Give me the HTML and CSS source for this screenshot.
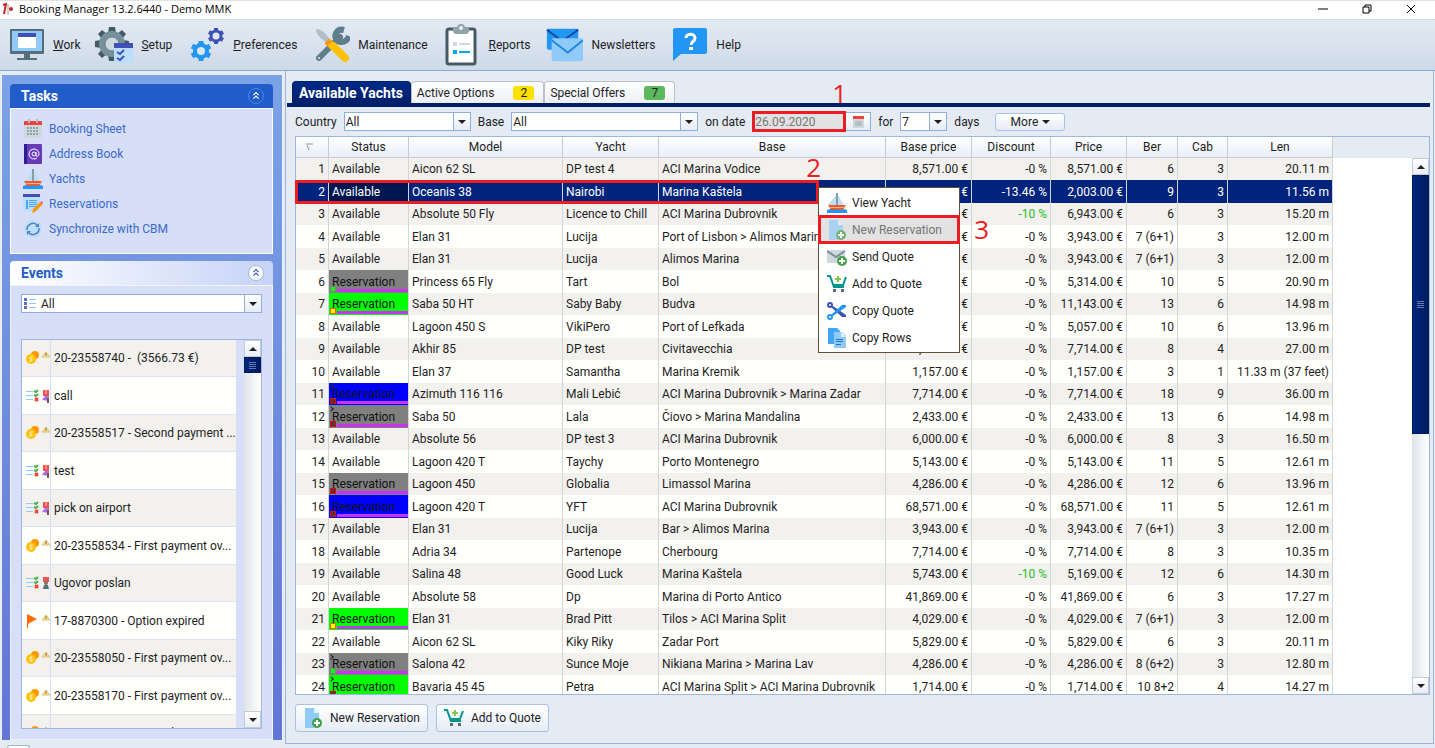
FILE: index.html
```html
<!DOCTYPE html>
<html lang="en">
<head>
    <meta charset="UTF-8">
    <meta name="viewport" content="width=device-width, initial-scale=1.0">
    <title>Booking Manager 13.2.6440 - Demo MMK</title>
    <link rel="stylesheet" href="styles.css">
</head>
<body>
    <!-- icons -->
    <svg class="sprite" aria-hidden="true">
        <symbol id="i-work" viewBox="0 0 38 38">
            <path fill="#546e7a" d="M4 3h32a1 1 0 0 1 1 1v23a1 1 0 0 1-1 1H4a1 1 0 0 1-1-1V4a1 1 0 0 1 1-1zM17 28h6v4h-6zM10 32h20v2H10z"/>
            <path fill="#90caf9" d="M5 5h30v20H5z"/>
            <path fill="#fff" d="M11 8h18v14H11z"/>
            <path fill="#3f51b5" d="M11 7h18v4H11z"/>
        </symbol>
        <symbol id="i-setup" viewBox="0 0 38 38">
            <g fill="#455a64">
                <path d="M14 1h6l1 6h-8zM14 35h6l1-6h-8zM0 15l6-1v8l-6-1zM34 15l-6-1v8l6-1z"/>
                <path d="M3 8l4-4 5 4-5 5zM31 8l-4-4-5 4 5 5zM3 28l4 4 5-4-5-5z"/>
            </g>
            <circle cx="17" cy="18" r="10" fill="none" stroke="#78909c" stroke-width="6"/>
            <circle cx="17" cy="18" r="7" fill="#cfd8dc" stroke="#607d8b"/>
            <path fill="#bbdefb" d="M19 18h19v19H19z"/>
            <path fill="#3f51b5" d="M19 17h19v5H19z"/>
            <path fill="none" stroke="#3f51b5" stroke-width="2" d="M22 26l3 2 4-4M22 32l3 2 4-4"/>
        </symbol>
        <symbol id="i-prefs" viewBox="0 0 38 38">
            <g stroke="#2196f3" stroke-width="5"><path d="M14 15v20M5 20l18 10M5 30l18-10"/></g>
            <circle cx="14" cy="25" r="6" fill="#dde6f1" stroke="#2196f3" stroke-width="4"/>
            <g stroke="#3f51b5" stroke-width="4"><path d="M29 2v16M22 6l14 8M22 14l14-8"/></g>
            <circle cx="29" cy="10" r="5" fill="#dde6f1" stroke="#3f51b5" stroke-width="3"/>
        </symbol>
        <symbol id="i-maint" viewBox="0 0 38 38">
            <path fill="#b0bec5" d="M4 3c4 0 9 3 12 8l4 5-3 3-6-5C7 11 4 7 4 3z"/>
            <path stroke="#607d8b" stroke-width="6" stroke-linecap="round" d="M7 32l21-21"/>
            <path fill="none" stroke="#607d8b" stroke-width="6" d="M32 4c-7-2-10 5-8 9s10 5 13-3"/>
            <circle cx="7" cy="32" r="1" fill="#eceff1"/>
            <path stroke="#ff9800" stroke-width="7" d="M15 15l5 5"/>
            <path stroke="#ffc107" stroke-width="8" stroke-linecap="round" d="M21 20l12 12"/>
        </symbol>
        <symbol id="i-reports" viewBox="0 0 38 42">
            <rect x="4" y="5" width="28" height="35" rx="2" fill="#fff" stroke="#455a64" stroke-width="3"/>
            <path fill="#90a4ae" d="M10 4h16v4l-2 2H12l-2-2z"/>
            <circle cx="18" cy="4" r="3" fill="#eceff1" stroke="#90a4ae" stroke-width="2"/>
            <path fill="#cfd8dc" d="M10 18h4v4h-4zM16 19h11v2H16z"/>
            <path fill="#03a9f4" d="M10 26h4v4h-4zM16 27h11v2H16z"/>
        </symbol>
        <symbol id="i-news" viewBox="0 0 40 38">
            <path fill="#2196f3" d="M3 2h31a1 1 0 0 1 1 1v21H4a2 2 0 0 1-2-2V4z"/>
            <path fill="none" stroke="#0d47a1" stroke-width="2" d="M2 3l16 12L35 3"/>
            <rect x="7" y="12" width="33" height="24" rx="2" fill="#90caf9"/>
            <path fill="none" stroke="#1e88e5" stroke-width="2" d="M7 14l17 13 16-13"/>
        </symbol>
        <symbol id="i-help" viewBox="0 0 38 38">
            <path fill="#2196f3" d="M5 2h30a2 2 0 0 1 2 2v22a2 2 0 0 1-2 2H11l-8 7V4a2 2 0 0 1 2-2z"/>
            <path fill="none" stroke="#fff" stroke-width="3" d="M16 12c0-5 9-5 9 0 0 4-4 3-4 7"/>
            <path fill="#fff" d="M19 21h4v3h-4z"/>
        </symbol>
        <symbol id="i-calendar" viewBox="0 0 20 20">
            <rect x="1" y="3" width="18" height="16" rx="2" fill="#cfd8dc"/>
            <path fill="#f44336" d="M1 6V3a1 1 0 0 1 1-1h16a1 1 0 0 1 1 1v3z"/>
            <path fill="#b0bec5" d="M5 0h2v4H5zM13 0h2v4h-2z"/>
            <path stroke="#90a4ae" stroke-width="2" stroke-dasharray="2 1" d="M4 9h12M4 12h12M4 15h12"/>
        </symbol>
        <symbol id="i-calendar-small" viewBox="0 0 13 13">
            <path fill="#cfd8dc" d="M1 3h11v10H1z"/>
            <path fill="#b0bec5" d="M3 6h7v5H3z"/>
            <path fill="#f44336" d="M1 1h11v3H1z"/>
        </symbol>
        <symbol id="i-address" viewBox="0 0 20 20">
            <rect x="1" y="0" width="18" height="20" rx="1" fill="#673ab7"/>
            <path fill="#311b92" d="M1 0h3v20H1z"/>
            <circle cx="11" cy="10" r="2" fill="none" stroke="#fff"/>
            <path fill="none" stroke="#fff" d="M13 8v3c0 2 3 2 3-1a5 5 0 1 0-2 4"/>
        </symbol>
        <symbol id="i-yacht" viewBox="0 0 20 20">
            <path fill="#bbdefb" d="M9 2v10H1zM11 2l6 10h-6z"/>
            <path fill="#8d9ba3" d="M9 0h2v13H9z"/>
            <path fill="#ff5722" d="M1 12h18l-3 5H4z"/>
            <path fill="#ffab91" d="M3 14h14v1H3z"/>
            <path fill="#2196f3" d="M0 17l3-1 3 1 4-1 4 1 3-1 3 1v3H0z"/>
        </symbol>
        <symbol id="i-reserv" viewBox="0 0 20 20">
            <path fill="#bbdefb" d="M0 3h17v14H0z"/>
            <path fill="#3f51b5" d="M0 0h17v3H0z"/>
            <path fill="#42a5f5" d="M3 6h2v9H3zM6 6h8v1H6zM6 8h8v1H6zM6 10h8v1H6zM6 12h8v1H6z"/>
            <path fill="#ff9800" d="M9 19l1-4 7-7 2 3-7 7z"/>
            <path fill="#f06292" d="M17 8l2-1 1 2-1 2z"/>
        </symbol>
        <symbol id="i-sync" viewBox="0 0 20 20">
            <circle cx="10" cy="10" r="9" fill="#bbdefb"/>
            <path fill="none" stroke="#4f7fc4" stroke-width="1.5" d="M4 11a6 6 0 0 1 10-5M16 9a6 6 0 0 1-10 5"/>
            <path fill="#4f7fc4" d="M12 8h4V4zM8 12H4v4z"/>
        </symbol>
        <symbol id="i-list" viewBox="0 0 12 12">
            <path fill="#5c6bc0" d="M0 0h3v3H0zM0 4h3v3H0zM0 8h3v3H0z"/>
            <path fill="#90caf9" d="M5 1h7v1H5zM5 5h7v1H5zM5 9h7v1H5z"/>
        </symbol>
        <symbol id="i-newres" viewBox="0 0 20 20">
            <path fill="#90caf9" d="M2 0h9l5 5v15H2z"/>
            <path fill="#e1f5fe" d="M11 0l5 5h-5z"/>
            <circle cx="14" cy="15" r="5" fill="#43a047"/>
            <path stroke="#fff" stroke-width="2" d="M14 12v6M11 15h6"/>
        </symbol>
        <symbol id="i-send" viewBox="0 0 20 20">
            <path fill="#cfd8dc" d="M0 3h18v13H0z"/>
            <path fill="none" stroke="#78909c" stroke-width="2" d="M0 4l9 6 9-6"/>
            <circle cx="15" cy="14" r="5" fill="#43a047"/>
            <path stroke="#fff" stroke-width="2" d="M15 11v6M12 14h6"/>
        </symbol>
        <symbol id="i-cart" viewBox="0 0 20 20">
            <path fill="none" stroke="#009688" stroke-width="2" d="M0 2h3l4 11h10M19 3l-3 8H7"/>
            <path fill="#8bc34a" d="M10 2h2v2h2v2h-2v2h-2V6H8V4h2z"/>
            <path fill="#546e7a" d="M6 15h3v3H6zM14 15h3v3h-3z"/>
        </symbol>
        <symbol id="i-cut" viewBox="0 0 20 20">
            <g fill="none" stroke-width="2">
                <circle cx="3" cy="4" r="2" stroke="#3f51b5"/><circle cx="3" cy="16" r="2" stroke="#2196f3"/>
            </g>
            <path fill="#3f51b5" d="M4 6l2-1 13 9v2h-4z"/>
            <path fill="#2196f3" d="M4 14l2 1L19 6V4h-4z"/>
        </symbol>
        <symbol id="i-copy" viewBox="0 0 20 20">
            <path fill="#42a5f5" d="M1 0h9l3 3v13H1z"/>
            <path fill="#90caf9" d="M7 4h8l4 4v12H7z"/>
            <path fill="#e3f2fd" d="M14 4l5 5h-5z"/>
            <path fill="#1976d2" d="M9 11h7v1H9zM9 13h7v1H9zM9 16h5v1H9z"/>
        </symbol>
        <symbol id="i-coin" viewBox="0 0 24 14">
            <circle cx="9" cy="4" r="4" fill="#ff9800"/>
            <circle cx="5" cy="8" r="5" fill="#ffc107"/>
            <path fill="none" stroke="#fff3c4" d="M7 6H4v2h2v2H3"/>
            <path fill="#f7e2a4" stroke="#e3c069" d="M20 1l4 5h-8z"/>
            <path stroke="#8d6e3f" d="M20 2v3"/>
        </symbol>
        <symbol id="i-call" viewBox="0 0 24 14">
            <path fill="#90caf9" d="M0 2h7v1H0zM0 6h7v1H0zM0 10h7v1H0z"/>
            <path fill="none" stroke="#4caf50" stroke-width="2" d="M8 2l2 1 2-2M8 6l2 1 2-2"/>
            <path stroke="#f44336" stroke-width="2" d="M9 9l3 3M12 9l-3 3"/>
            <path fill="#ef5350" d="M17 1h6v6h-6z"/>
            <path stroke="#ffcdd2" d="M20 0v5"/>
            <path fill="#ab6ee8" d="M16 11l3-4h4v5z"/>
            <path fill="#795548" d="M21 9h2v5h-2z"/>
        </symbol>
        <symbol id="i-person" viewBox="0 0 24 14">
            <path fill="#90caf9" d="M0 2h7v1H0zM0 6h7v1H0zM0 10h7v1H0z"/>
            <path fill="none" stroke="#4caf50" stroke-width="2" d="M8 2l2 1 2-2M8 6l2 1 2-2"/>
            <path stroke="#f44336" stroke-width="2" d="M9 9l3 3M12 9l-3 3"/>
            <path fill="#ef5350" d="M17 1h6v5h-6z"/>
            <circle cx="20" cy="7" r="2" fill="#8d6e63"/>
            <path fill="#546e7a" d="M17 13l1-4h4l1 4z"/>
        </symbol>
        <symbol id="i-flag" viewBox="0 0 24 14">
            <path fill="#ff6d00" d="M1 0l10 5-9 5v4H1z"/>
            <path fill="#f7e2a4" stroke="#e3c069" d="M20 1l4 5h-8z"/>
            <path stroke="#8d6e3f" d="M20 2v3"/>
        </symbol>
        <symbol id="i-collapse" viewBox="0 0 16 16">
            <path fill="none" stroke="currentColor" stroke-width="1.3" d="M5 7l3-3 3 3M5 11l3-3 3 3"/>
        </symbol>
        <symbol id="i-logo" viewBox="0 0 12 12">
            <path fill="none" stroke="#c62828" stroke-width="2" d="M1 2l3-1-2 10"/>
            <path stroke="#9e9e9e" d="M6 1v11"/>
            <circle cx="9" cy="6" r="2" fill="#c62828"/>
        </symbol>
    </svg>

    <header class="titlebar">
        <svg class="logo"><use href="#i-logo"/></svg>
        <span class="title">Booking Manager 13.2.6440 - Demo MMK</span>
        <button class="win-btn" aria-label="Minimize"><svg viewBox="0 0 10 10"><path d="M0 5h10"/></svg></button>
        <button class="win-btn" aria-label="Restore"><svg viewBox="0 0 10 10"><path d="M1 3h6v6H1zM3 3V1h6v6H7"/></svg></button>
        <button class="win-btn" aria-label="Close"><svg viewBox="0 0 10 10"><path d="M1 1l8 8M9 1L1 9"/></svg></button>
    </header>

    <nav class="toolbar">
        <button class="tool"><svg><use href="#i-work"/></svg><span><u>W</u>ork</span></button>
        <button class="tool"><svg><use href="#i-setup"/></svg><span><u>S</u>etup</span></button>
        <button class="tool"><svg><use href="#i-prefs"/></svg><span><u>P</u>references</span></button>
        <button class="tool"><svg><use href="#i-maint"/></svg><span>Maintenance</span></button>
        <button class="tool"><svg><use href="#i-reports"/></svg><span><u>R</u>eports</span></button>
        <button class="tool"><svg><use href="#i-news"/></svg><span>Newsletters</span></button>
        <button class="tool"><svg><use href="#i-help"/></svg><span>Help</span></button>
    </nav>

    <div class="content">
        <aside class="sidebar">
            <section class="box">
                <div class="box-head box-head-blue">
                    <h2>Tasks</h2>
                    <button class="collapse" aria-label="Collapse tasks"><svg><use href="#i-collapse"/></svg></button>
                </div>
                <div class="tasks">
                    <a class="task" href="#"><svg><use href="#i-calendar"/></svg>Booking Sheet</a>
                    <a class="task" href="#"><svg><use href="#i-address"/></svg>Address Book</a>
                    <a class="task" href="#"><svg><use href="#i-yacht"/></svg>Yachts</a>
                    <a class="task" href="#"><svg><use href="#i-reserv"/></svg>Reservations</a>
                    <a class="task" href="#"><svg><use href="#i-sync"/></svg>Synchronize with CBM</a>
                </div>
            </section>

            <section class="box box-events">
                <div class="box-head">
                    <h2>Events</h2>
                    <button class="collapse" aria-label="Collapse events"><svg><use href="#i-collapse"/></svg></button>
                </div>
                <div class="events">
                    <div class="combo combo-events">
                        <svg><use href="#i-list"/></svg>
                        <select aria-label="Event type"><option>All</option></select>
                    </div>
                    <div class="event-panel">
                        <ul class="event-list">
                            <li><svg><use href="#i-coin"/></svg><span>20-23558740 -&nbsp; (3566.73 €)</span></li>
                            <li><svg><use href="#i-call"/></svg><span>call</span></li>
                            <li><svg><use href="#i-coin"/></svg><span>20-23558517 - Second payment ...</span></li>
                            <li><svg><use href="#i-call"/></svg><span>test</span></li>
                            <li><svg><use href="#i-call"/></svg><span>pick on airport</span></li>
                            <li><svg><use href="#i-coin"/></svg><span>20-23558534 - First payment ov...</span></li>
                            <li><svg><use href="#i-person"/></svg><span>Ugovor poslan</span></li>
                            <li><svg><use href="#i-flag"/></svg><span>17-8870300 - Option expired</span></li>
                            <li><svg><use href="#i-coin"/></svg><span>20-23558050 - First payment ov...</span></li>
                            <li><svg><use href="#i-coin"/></svg><span>20-23558170 - First payment ov...</span></li>
                            <li><svg><use href="#i-coin"/></svg><span>20-23558171 - Second payment ...</span></li>
                        </ul>
                        <div class="scrollbar">
                            <button class="scroll-btn up" aria-label="Scroll up"></button>
                            <div class="thumb thumb-small"></div>
                            <button class="scroll-btn down" aria-label="Scroll down"></button>
                        </div>
                    </div>
                </div>
            </section>
        </aside>

        <main class="main">
            <div class="tabs">
                <button class="tab active">Available Yachts</button>
                <button class="tab">Active Options <span class="count yellow">2</span></button>
                <button class="tab">Special Offers <span class="count green">7</span></button>
            </div>

            <form class="filters">
                <label for="country">Country</label>
                <div class="combo combo-country"><select id="country"><option>All</option></select></div>
                <label for="base">Base</label>
                <div class="combo combo-base"><select id="base"><option>All</option></select></div>
                <label for="date">on date</label>
                <div class="date">
                    <input type="text" id="date" value="26.09.2020">
                    <button type="button" class="date-btn" aria-label="Pick date"><svg><use href="#i-calendar-small"/></svg></button>
                    <span class="mark mark-1">1</span>
                </div>
                <label for="days">for</label>
                <div class="combo combo-days"><select id="days"><option>7</option></select></div>
                <span>days</span>
                <button type="button" class="more">More <i class="arrow"></i></button>
            </form>

            <div class="grid">
                <div class="grid-rows">
                    <table>
                        <colgroup>
                            <col class="c-num"><col class="c-status"><col class="c-model"><col class="c-yacht"><col class="c-base"><col class="c-bprice"><col class="c-disc"><col class="c-price"><col class="c-ber"><col class="c-cab"><col class="c-len">
                        </colgroup>
                        <thead>
                            <tr><th><svg class="sort" viewBox="0 0 8 8"><path d="M0 1h7M1 2l2 5"/></svg></th><th>Status</th><th>Model</th><th>Yacht</th><th>Base</th><th>Base price</th><th>Discount</th><th>Price</th><th>Ber</th><th>Cab</th><th>Len</th></tr>
                        </thead>
                        <tbody>
                            <tr><td>1</td><td>Available</td><td>Aicon 62 SL</td><td>DP test 4</td><td>ACI Marina Vodice</td><td>8,571.00 €</td><td>-0 %</td><td>8,571.00 €</td><td>6</td><td>3</td><td>20.11 m</td></tr>
                            <tr class="selected"><td>2</td><td>Available</td><td>Oceanis 38</td><td>Nairobi</td><td>Marina Kaštela</td><td>2,314.00 €</td><td>-13.46 %</td><td>2,003.00 €</td><td>9</td><td>3</td><td>11.56 m</td></tr>
                            <tr><td>3</td><td>Available</td><td>Absolute 50 Fly</td><td>Licence to Chill</td><td>ACI Marina Dubrovnik</td><td>7,714.00 €</td><td class="off">-10 %</td><td>6,943.00 €</td><td>6</td><td>3</td><td>15.20 m</td></tr>
                            <tr><td>4</td><td>Available</td><td>Elan 31</td><td>Lucija</td><td>Port of Lisbon &gt; Alimos Marina</td><td>3,943.00 €</td><td>-0 %</td><td>3,943.00 €</td><td>7 (6+1)</td><td>3</td><td>12.00 m</td></tr>
                            <tr><td>5</td><td>Available</td><td>Elan 31</td><td>Lucija</td><td>Alimos Marina</td><td>3,943.00 €</td><td>-0 %</td><td>3,943.00 €</td><td>7 (6+1)</td><td>3</td><td>12.00 m</td></tr>
                            <tr><td>6</td><td class="res gray lime">Reservation</td><td>Princess 65 Fly</td><td>Tart</td><td>Bol</td><td>5,314.00 €</td><td>-0 %</td><td>5,314.00 €</td><td>10</td><td>5</td><td>20.90 m</td></tr>
                            <tr><td>7</td><td class="res green yellow">Reservation</td><td>Saba 50 HT</td><td>Saby Baby</td><td>Budva</td><td>11,143.00 €</td><td>-0 %</td><td>11,143.00 €</td><td>13</td><td>6</td><td>14.98 m</td></tr>
                            <tr><td>8</td><td>Available</td><td>Lagoon 450 S</td><td>VikiPero</td><td>Port of Lefkada</td><td>5,057.00 €</td><td>-0 %</td><td>5,057.00 €</td><td>10</td><td>6</td><td>13.96 m</td></tr>
                            <tr><td>9</td><td>Available</td><td>Akhir 85</td><td>DP test</td><td>Civitavecchia</td><td>7,714.00 €</td><td>-0 %</td><td>7,714.00 €</td><td>8</td><td>4</td><td>27.00 m</td></tr>
                            <tr><td>10</td><td>Available</td><td>Elan 37</td><td>Samantha</td><td>Marina Kremik</td><td>1,157.00 €</td><td>-0 %</td><td>1,157.00 €</td><td>3</td><td>1</td><td>11.33 m (37 feet)</td></tr>
                            <tr><td>11</td><td class="res blue"><i class="chevron"></i>Reservation</td><td>Azimuth 116 116</td><td>Mali Lebić</td><td>ACI Marina Dubrovnik &gt; Marina Zadar</td><td>7,714.00 €</td><td>-0 %</td><td>7,714.00 €</td><td>18</td><td>9</td><td>36.00 m</td></tr>
                            <tr><td>12</td><td class="res gray"><i class="chevron"></i>Reservation</td><td>Saba 50</td><td>Lala</td><td>Čiovo &gt; Marina Mandalina</td><td>2,433.00 €</td><td>-0 %</td><td>2,433.00 €</td><td>13</td><td>6</td><td>14.98 m</td></tr>
                            <tr><td>13</td><td>Available</td><td>Absolute 56</td><td>DP test 3</td><td>ACI Marina Dubrovnik</td><td>6,000.00 €</td><td>-0 %</td><td>6,000.00 €</td><td>8</td><td>3</td><td>16.50 m</td></tr>
                            <tr><td>14</td><td>Available</td><td>Lagoon 420 T</td><td>Taychy</td><td>Porto Montenegro</td><td>5,143.00 €</td><td>-0 %</td><td>5,143.00 €</td><td>11</td><td>5</td><td>12.61 m</td></tr>
                            <tr><td>15</td><td class="res gray">Reservation</td><td>Lagoon 450</td><td>Globalia</td><td>Limassol Marina</td><td>4,286.00 €</td><td>-0 %</td><td>4,286.00 €</td><td>12</td><td>6</td><td>13.96 m</td></tr>
                            <tr><td>16</td><td class="res blue">Reservation</td><td>Lagoon 420 T</td><td>YFT</td><td>ACI Marina Dubrovnik</td><td>68,571.00 €</td><td>-0 %</td><td>68,571.00 €</td><td>11</td><td>5</td><td>12.61 m</td></tr>
                            <tr><td>17</td><td>Available</td><td>Elan 31</td><td>Lucija</td><td>Bar &gt; Alimos Marina</td><td>3,943.00 €</td><td>-0 %</td><td>3,943.00 €</td><td>7 (6+1)</td><td>3</td><td>12.00 m</td></tr>
                            <tr><td>18</td><td>Available</td><td>Adria 34</td><td>Partenope</td><td>Cherbourg</td><td>7,714.00 €</td><td>-0 %</td><td>7,714.00 €</td><td>8</td><td>3</td><td>10.35 m</td></tr>
                            <tr><td>19</td><td>Available</td><td>Salina 48</td><td>Good Luck</td><td>Marina Kaštela</td><td>5,743.00 €</td><td class="off">-10 %</td><td>5,169.00 €</td><td>12</td><td>6</td><td>14.30 m</td></tr>
                            <tr><td>20</td><td>Available</td><td>Absolute 58</td><td>Dp</td><td>Marina di Porto Antico</td><td>41,869.00 €</td><td>-0 %</td><td>41,869.00 €</td><td>6</td><td>3</td><td>17.27 m</td></tr>
                            <tr><td>21</td><td class="res green yellow">Reservation</td><td>Elan 31</td><td>Brad Pitt</td><td>Tilos &gt; ACI Marina Split</td><td>4,029.00 €</td><td>-0 %</td><td>4,029.00 €</td><td>7 (6+1)</td><td>3</td><td>12.00 m</td></tr>
                            <tr><td>22</td><td>Available</td><td>Aicon 62 SL</td><td>Kiky Riky</td><td>Zadar Port</td><td>5,829.00 €</td><td>-0 %</td><td>5,829.00 €</td><td>6</td><td>3</td><td>20.11 m</td></tr>
                            <tr><td>23</td><td class="res gray lime"><i class="chevron"></i>Reservation</td><td>Salona 42</td><td>Sunce Moje</td><td>Nikiana Marina &gt; Marina Lav</td><td>4,286.00 €</td><td>-0 %</td><td>4,286.00 €</td><td>8 (6+2)</td><td>3</td><td>12.80 m</td></tr>
                            <tr><td>24</td><td class="res green"><i class="chevron"></i>Reservation</td><td>Bavaria 45 45</td><td>Petra</td><td>ACI Marina Split &gt; ACI Marina Dubrovnik</td><td>1,714.00 €</td><td>-0 %</td><td>1,714.00 €</td><td>10 8+2</td><td>4</td><td>14.27 m</td></tr>
                        </tbody>
                    </table>
                </div>
                <div class="scrollbar scrollbar-grid">
                    <button class="scroll-btn up" aria-label="Scroll up"></button>
                    <div class="thumb thumb-large"></div>
                    <button class="scroll-btn down" aria-label="Scroll down"></button>
                </div>

                <div class="row-frame"><span class="mark mark-2">2</span></div>

                <div class="context-menu">
                    <button class="menu-item"><svg><use href="#i-yacht"/></svg>View Yacht</button>
                    <button class="menu-item hot"><svg><use href="#i-newres"/></svg>New Reservation<span class="mark mark-3">3</span></button>
                    <button class="menu-item"><svg><use href="#i-send"/></svg>Send Quote</button>
                    <button class="menu-item"><svg><use href="#i-cart"/></svg>Add to Quote</button>
                    <button class="menu-item"><svg><use href="#i-cut"/></svg>Copy Quote</button>
                    <button class="menu-item"><svg><use href="#i-copy"/></svg>Copy Rows</button>
                </div>
            </div>

            <div class="actions">
                <button class="action"><svg><use href="#i-newres"/></svg>New Reservation</button>
                <button class="action"><svg><use href="#i-cart"/></svg>Add to Quote</button>
            </div>
        </main>
    </div>

    <footer class="statusbar"><span class="status-tab"></span></footer>
</body>
</html>
```
FILE: styles.css
```css
*, *::before, *::after {
    box-sizing: border-box;
}
body {
    display: flex;
    flex-direction: column;
    height: 100vh;
    margin: 0;
    overflow: hidden;
    background-color: #e4ebf3;
    color: #1e1e1e;
    font-family: Roboto, "Liberation Sans", sans-serif;
    font-size: 12px;
    line-height: 16px;
}
button, input, select {
    margin: 0;
    padding: 0;
    border: none;
    border-radius: 0;
    background: none;
    color: inherit;
    font: inherit;
}
svg {
    display: block;
    flex: none;
}
.sprite {
    position: absolute;
    width: 0;
    height: 0;
}

/* title bar */
.titlebar {
    display: flex;
    align-items: center;
    flex: none;
    height: 19px;
    padding: 0 2px 3px;
    border-top: 1px solid #e2e2e2;
    background-color: #fff;
    font-family: "Open Sans", "Noto Sans", sans-serif;
    font-size: 11px;
}
.logo {
    width: 12px;
    height: 12px;
}
.title {
    flex: 1;
    padding-left: 5px;
    color: #000;
}
.win-btn {
    display: flex;
    justify-content: center;
    width: 44px;
}
.win-btn svg {
    width: 10px;
    height: 10px;
    fill: none;
    stroke: #000;
}

/* toolbar */
.toolbar {
    display: flex;
    align-items: center;
    flex: none;
    gap: 15px;
    height: 52px;
    padding-left: 7px;
    border-top: 1px solid #d3dce2;
    border-bottom: 1px solid #8ca9d6;
    background: linear-gradient(#e3eaf3, #cedae8);
}
.tool {
    display: flex;
    align-items: center;
    gap: 8px;
}
.tool svg {
    width: 38px;
    height: 42px;
}

.content {
    display: flex;
    flex: 1;
    min-height: 0;
}

/* sidebar */
.sidebar {
    display: flex;
    flex-direction: column;
    flex: none;
    gap: 7px;
    width: 282px;
    margin: 4px 2px 4px 1px;
    padding: 9px 9px 0 8px;
    border: 1px solid #eef3fb;
    border-width: 0 1px;
    background: linear-gradient(#7ba2e7, #6375d6);
}
.box-head {
    display: flex;
    align-items: center;
    justify-content: space-between;
    height: 24px;
    padding: 0 9px 0 11px;
    border-radius: 4px 4px 0 0;
    background: linear-gradient(to right, #fff, #c6d3f7);
    color: #215dc6;
}
.box-head-blue {
    background: #215dc9;
    color: #fff;
}
.box h2 {
    margin: 0;
    font-size: 14px;
    font-weight: bold;
}
.collapse {
    width: 16px;
    height: 16px;
    border: 1px solid #a9b5d8;
    border-radius: 50%;
    background-color: #fff;
    color: #215dc6;
}
.collapse svg {
    width: 14px;
    height: 14px;
}
.box-head-blue .collapse {
    border-color: #4a86f0;
    background-color: transparent;
    color: #fff;
}
.tasks {
    padding: 7px 0 12px 12px;
    border: 1px solid #fff;
    background-color: #d6dff7;
}
.task {
    display: flex;
    align-items: center;
    gap: 6px;
    height: 25px;
    color: #3b6acb;
    text-decoration: none;
}
.task svg {
    width: 20px;
    height: 20px;
}
.box-events {
    display: flex;
    flex-direction: column;
    flex: 1;
    min-height: 0;
}
.events {
    display: flex;
    flex-direction: column;
    flex: 1;
    gap: 26px;
    min-height: 0;
    padding: 8px 10px 10px;
    border: 1px solid #f0f4fd;
    background-color: #d6dff7;
}
.event-panel {
    display: flex;
    flex: 1;
    gap: 8px;
    min-height: 0;
    border: 1px solid #9db8e0;
}
.event-list {
    flex: 1;
    min-width: 0;
    margin: 0;
    padding: 0;
    overflow: hidden;
    list-style: none;
}
.event-list li {
    display: flex;
    align-items: center;
    height: 37px;
    border-bottom: 1px solid #dbe3f5;
    background-color: #f3f1ee;
}
.event-list li:nth-child(even) {
    height: 38px;
    background-color: #fffffc;
}
.event-list svg {
    width: 24px;
    height: 14px;
    margin-left: 4px;
}
.event-list span {
    flex: 1;
    align-content: center;
    height: 100%;
    padding-left: 3px;
    border-left: 1px solid #d6dff7;
    white-space: nowrap;
}

/* combo boxes */
.combo {
    display: flex;
    align-items: center;
    position: relative;
    height: 19px;
    border: 1px solid #8faede;
    background-color: #fff;
}
.combo svg {
    width: 12px;
    height: 12px;
    margin-left: 2px;
}
.combo select {
    flex: 1;
    height: 100%;
    padding-left: 1px;
    appearance: none;
}
.combo-events select {
    padding-left: 5px;
}
.combo::before {
    content: "";
    position: absolute;
    top: 0;
    right: 0;
    width: 17px;
    height: 100%;
    border-left: 1px solid #8faede;
    background: linear-gradient(#fff, #e6ecf5);
    pointer-events: none;
}
.combo::after {
    content: "";
    position: absolute;
    top: 7px;
    right: 4px;
    border: 4px solid transparent;
    border-top-color: #222;
    border-bottom: none;
    pointer-events: none;
}

/* scrollbars */
.scrollbar {
    display: flex;
    flex-direction: column;
    flex: none;
    width: 17px;
    background: linear-gradient(to right, #dfe3e8, #fff);
}
.scroll-btn {
    flex: none;
    width: 100%;
    height: 17px;
    border: 1px solid #c3cbd6;
    background: linear-gradient(#fff, #eaeef4);
}
.scroll-btn::before {
    content: "";
    display: block;
    width: 8px;
    margin: auto;
    border: 4px solid transparent;
}
.scroll-btn.up::before {
    border-top: none;
    border-bottom-color: #222;
}
.scroll-btn.down::before {
    border-top-color: #222;
    border-bottom: none;
}
.scroll-btn.down {
    margin-top: auto;
}
.thumb {
    display: flex;
    align-items: center;
    justify-content: center;
    border: 1px solid #001a5c;
    background: linear-gradient(to right, #00267f, #001b60);
}
.thumb::before {
    content: "";
    width: 7px;
    height: 7px;
    background: repeating-linear-gradient(#6379b0 0 1px, transparent 1px 2px);
}
.thumb-small {
    height: 16px;
}
.thumb-large {
    height: 259px;
}

/* main panel */
.main {
    display: flex;
    flex-direction: column;
    flex: 1;
    min-width: 0;
    padding: 10px 3px 0 1px;
    border: 1px solid #9cb4d9;
    border-top: none;
    margin-right: 1px;
}
.tabs {
    display: flex;
    align-items: flex-end;
    padding-left: 5px;
    border-bottom: 4px solid #001f6b;
}
.tab {
    display: flex;
    align-items: center;
    height: 22px;
    padding: 0 9px 0 5px;
    border: 1px solid #bdc1c7;
    border-bottom: none;
    border-radius: 4px 4px 0 0;
    background: linear-gradient(#fff, #eceff4);
}
.tab.active {
    padding: 0 7px 0 6px;
    border-color: #001f6b;
    background: linear-gradient(#002a86, #001f6b);
    color: #fff;
    font-size: 14px;
    font-weight: bold;
}
.count {
    width: 21px;
    height: 14px;
    margin-left: 19px;
    border-radius: 3px;
    line-height: 14px;
    text-align: center;
}
.count.yellow {
    background-color: #ffe100;
}
.count.green {
    background-color: #5cb85c;
}
.filters {
    display: flex;
    align-items: center;
    gap: 7px;
    padding: 4px 0 4px 8px;
}
.combo-country {
    width: 127px;
}
.combo-base {
    width: 187px;
}
.combo-days {
    width: 47px;
}
.date {
    display: flex;
    position: relative;
}
.date input {
    width: 94px;
    height: 21px;
    border: 3px solid #ed1c24;
    background-color: #e2e2e2;
    color: #777;
}
.date-btn {
    display: flex;
    align-items: center;
    justify-content: center;
    align-self: center;
    width: 25px;
    height: 19px;
    border: 1px solid #8faede;
    border-left: none;
    background: linear-gradient(#fff, #e6ecf5);
}
.date-btn svg {
    width: 13px;
    height: 13px;
}
.mark {
    position: absolute;
    color: #ed1c24;
    font-family: "Open Sans", "Noto Sans", sans-serif;
    font-size: 26px;
    line-height: 26px;
}
.mark-1 {
    top: -31px;
    left: 80px;
}
.mark-2 {
    top: -29px;
    right: -5px;
}
.mark-3 {
    top: 0;
    right: -30px;
}
.more {
    display: flex;
    align-items: center;
    justify-content: center;
    gap: 4px;
    width: 70px;
    height: 18px;
    margin-left: 9px;
    border: 1px solid #a9c1e6;
    border-radius: 3px;
    background: linear-gradient(#fff, #e6ecf5);
}
.arrow {
    border: 4px solid transparent;
    border-top-color: #222;
    border-bottom: none;
}

/* yacht table */
.grid {
    display: flex;
    flex: 1;
    position: relative;
    min-height: 0;
    margin-left: 8px;
    border: 1px solid #9cb8e0;
    background: linear-gradient(#e4ebf3 21px, #fff 21px);
}
.grid-rows {
    flex: 1;
    min-width: 0;
    overflow: hidden;
}
table {
    width: 1037px;
    border-spacing: 0;
    table-layout: fixed;
}
.c-num { width: 33px; }
.c-status { width: 80px; }
.c-model { width: 154px; }
.c-yacht { width: 96px; }
.c-base { width: 227px; }
.c-bprice { width: 86px; }
.c-disc { width: 79px; }
.c-price { width: 76px; }
.c-ber { width: 51px; }
.c-cab { width: 50px; }
.c-len { width: 105px; }
th {
    height: 21px;
    padding: 0 3px;
    border-right: 1px solid #c6ccd4;
    border-bottom: 1px solid #c6ccd4;
    background: linear-gradient(#fff, #e8eef6);
    font-weight: normal;
}
.sort {
    width: 8px;
    height: 8px;
    margin-left: 7px;
    fill: none;
    stroke: #8f959c;
}
td {
    position: relative;
    height: 23px;
    padding: 0 3px;
    border-right: 1px solid #d3d5d6;
    background-color: #fffffc;
    text-align: right;
    white-space: nowrap;
    overflow: hidden;
}
td:nth-child(n+2):nth-child(-n+5) {
    text-align: left;
}
tbody tr:nth-child(odd) td {
    height: 22px;
    background-color: #f3f1ee;
}
tbody tr.selected td {
    background-color: #00247d;
    color: #fff;
}
tbody tr.selected td:nth-child(2) {
    background-color: #001650;
}
td.off {
    color: #22c022;
}
tbody tr td.gray {
    background-color: #808080;
}
tbody tr td.green {
    background-color: #00ff00;
}
tbody tr td.blue {
    background-color: #0000ff;
}
.res {
    color: #101010;
}
.res::before {
    content: "";
    position: absolute;
    bottom: 1px;
    left: 8px;
    right: 0;
    height: 3px;
    background-color: #c832f0;
}
.res::after {
    content: "";
    position: absolute;
    bottom: 1px;
    left: 1px;
    width: 6px;
    height: 6px;
    border: 1px solid #d01010;
    background-color: #5a3030;
}
.res.yellow::after {
    border-color: #f06000;
    background-color: #ffff00;
}
.res.lime::after {
    border-color: #808080;
    background-color: #00ff00;
}
.chevron {
    position: absolute;
    top: 2px;
    left: 0;
    width: 4px;
    height: 4px;
    border-top: 1px solid #222;
    border-right: 1px solid #222;
    transform: rotate(45deg);
}
.scrollbar-grid {
    margin-top: 21px;
}
.row-frame {
    position: absolute;
    top: 43px;
    left: -1px;
    width: 524px;
    height: 24px;
    border: 3px solid #ed1c24;
}

/* context menu */
.context-menu {
    position: absolute;
    top: 50px;
    left: 522px;
    width: 142px;
    padding: 1px 0;
    border: 1px solid #5d5236;
    background-color: #fff;
}
.menu-item {
    display: flex;
    align-items: center;
    gap: 5px;
    position: relative;
    width: 100%;
    height: 27px;
    padding-left: 8px;
}
.menu-item svg {
    width: 20px;
    height: 20px;
}
.menu-item.hot {
    outline: 3px solid #ed1c24;
    outline-offset: -2px;
    background-color: #e2e2e2;
    color: #777;
}
.menu-item.hot svg {
    opacity: 0.7;
}

/* bottom buttons */
.actions {
    display: flex;
    flex: none;
    gap: 8px;
    padding: 9px 0 11px 8px;
}
.action {
    display: flex;
    align-items: center;
    gap: 7px;
    height: 28px;
    padding: 0 7px;
    border: 1px solid #a9c1e6;
    border-radius: 3px;
    background: linear-gradient(#fff, #e6ecf5);
}
.action svg {
    width: 20px;
    height: 20px;
}
.statusbar {
    display: flex;
    flex: none;
    height: 4px;
    padding: 1px 0 0 7px;
}
.status-tab {
    width: 23px;
    border: 1px solid #9cb4d9;
    border-bottom: none;
    border-radius: 3px 3px 0 0;
    background-color: #fff;
}
```
